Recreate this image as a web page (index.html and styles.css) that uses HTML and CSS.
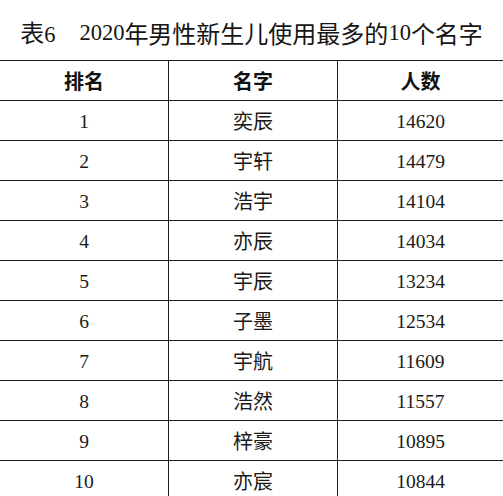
FILE: index.html
```html
<!DOCTYPE html>
<html lang="zh">
<head>
<meta charset="utf-8">
<link rel="stylesheet" href="styles.css">
</head>
<body>
<div class="page">
  <h1 class="title"><span class="tno">表<span class="num">6</span></span><span class="num">2020</span>年男性新生儿使用最多的<span class="num">10</span>个名字</h1>
  <div class="table">
    <div class="row head"><div class="cell">排名</div><div class="cell">名字</div><div class="cell">人数</div></div>
    <div class="row"><div class="cell num">1</div><div class="cell">奕辰</div><div class="cell num">14620</div></div>
    <div class="row"><div class="cell num">2</div><div class="cell">宇轩</div><div class="cell num">14479</div></div>
    <div class="row"><div class="cell num">3</div><div class="cell">浩宇</div><div class="cell num">14104</div></div>
    <div class="row"><div class="cell num">4</div><div class="cell">亦辰</div><div class="cell num">14034</div></div>
    <div class="row"><div class="cell num">5</div><div class="cell">宇辰</div><div class="cell num">13234</div></div>
    <div class="row"><div class="cell num">6</div><div class="cell">子墨</div><div class="cell num">12534</div></div>
    <div class="row"><div class="cell num">7</div><div class="cell">宇航</div><div class="cell num">11609</div></div>
    <div class="row"><div class="cell num">8</div><div class="cell">浩然</div><div class="cell num">11557</div></div>
    <div class="row"><div class="cell num">9</div><div class="cell">梓豪</div><div class="cell num">10895</div></div>
    <div class="row"><div class="cell num">10</div><div class="cell">亦宸</div><div class="cell num">10844</div></div>
  </div>
</div>
</body>
</html>
```

FILE: styles.css
```css
html, body {
  margin: 0;
  padding: 0;
  background: #fff;
}
body {
  width: 503px;
  height: 496px;
  overflow: hidden;
  color: #111;
  font-family: "Noto Sans CJK SC", "Noto Sans", sans-serif;
}
.page {
  display: flex;
  flex-direction: column;
}
.title {
  margin: 0;
  height: 60px;
  display: flex;
  align-items: center;
  justify-content: center;
  font-size: 24px;
  font-weight: 400;
  line-height: 1;
  padding-top: 6px;
  box-sizing: border-box;
  color: #151515;
}
.title .num {
  font-family: "Liberation Serif", serif;
  font-size: 22.5px;
}
.tno {
  margin-right: 24px;
}
.table {
  border-top: 1px solid #1a1a1a;
}
.row {
  display: grid;
  grid-template-columns: 168px 169px 1fr;
  height: 40px;
  box-sizing: border-box;
  border-bottom: 1px solid #1a1a1a;
}
.cell {
  display: flex;
  align-items: center;
  justify-content: center;
  font-size: 20px;
  line-height: 1;
  color: #1a1a1a;
}
.cell + .cell {
  border-left: 1px solid #1a1a1a;
}
.cell.num {
  font-family: "Liberation Serif", serif;
  font-size: 19.5px;
  padding-top: 2px;
}
.head .cell {
  font-weight: 700;
  font-size: 20px;
  color: #111;
}
```
